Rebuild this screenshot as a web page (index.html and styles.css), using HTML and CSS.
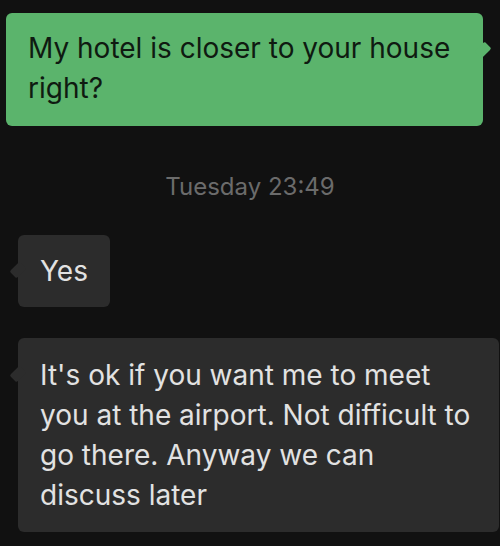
FILE: index.html
```html
<!DOCTYPE html>
<html lang="en">
<head>
    <meta charset="UTF-8">
    <meta name="viewport" content="width=device-width, initial-scale=1.0">
    <title>Chat</title>
    <link rel="stylesheet" href="styles.css">
</head>
<body>
    <div id="chat">
        <div class="bubble out">My hotel is closer to your house right?</div>

        <div class="stamp">Tuesday 23:49</div>

        <div class="bubble in short">Yes</div>

        <div class="bubble in long">It's ok if you want me to meet<br>you at the airport. Not difficult to<br>go there. Anyway we can<br>discuss later</div>
    </div>
</body>
</html>
```
FILE: styles.css
```css
body {
    font-family: Inter, "Noto Sans", sans-serif;
    margin: 0;
    padding: 0;
    background-color: #111111;
}

#chat {
    display: flex;
    flex-direction: column;
    padding-top: 13px;
}

.bubble {
    position: relative;
    font-size: 28px;
    line-height: 40px;
    border-radius: 6px;
    padding: 16px 22px;
}

.bubble::before {
    content: "";
    position: absolute;
    width: 14px;
    height: 14px;
    border-radius: 2px;
    transform: rotate(45deg) scaleX(0.7);
}

.out {
    align-self: flex-start;
    margin: 0 17px 0 6px;
    padding: 15px 30px 18px 22px;
    background-color: #5bb46c;
    color: #0f1a11;
}

.out::before {
    right: -7px;
    top: 30px;
    background-color: #5bb46c;
}

.in {
    align-self: flex-start;
    margin-left: 18px;
    margin-right: 1px;
    background-color: #2c2c2c;
    color: #e2e2e2;
}

.in::before {
    left: -7px;
    background-color: #2c2c2c;
}

.short {
    margin-top: 33px;
}

.short::before {
    top: 28px;
}

.long {
    margin-top: 31px;
    padding: 17px 22px;
    flex: 1;
    align-self: stretch;
}

.long::before {
    top: 29px;
}

.stamp {
    margin-top: 46px;
    text-align: center;
    font-size: 24px;
    line-height: 30px;
    color: #6b6b6b;
}
```
